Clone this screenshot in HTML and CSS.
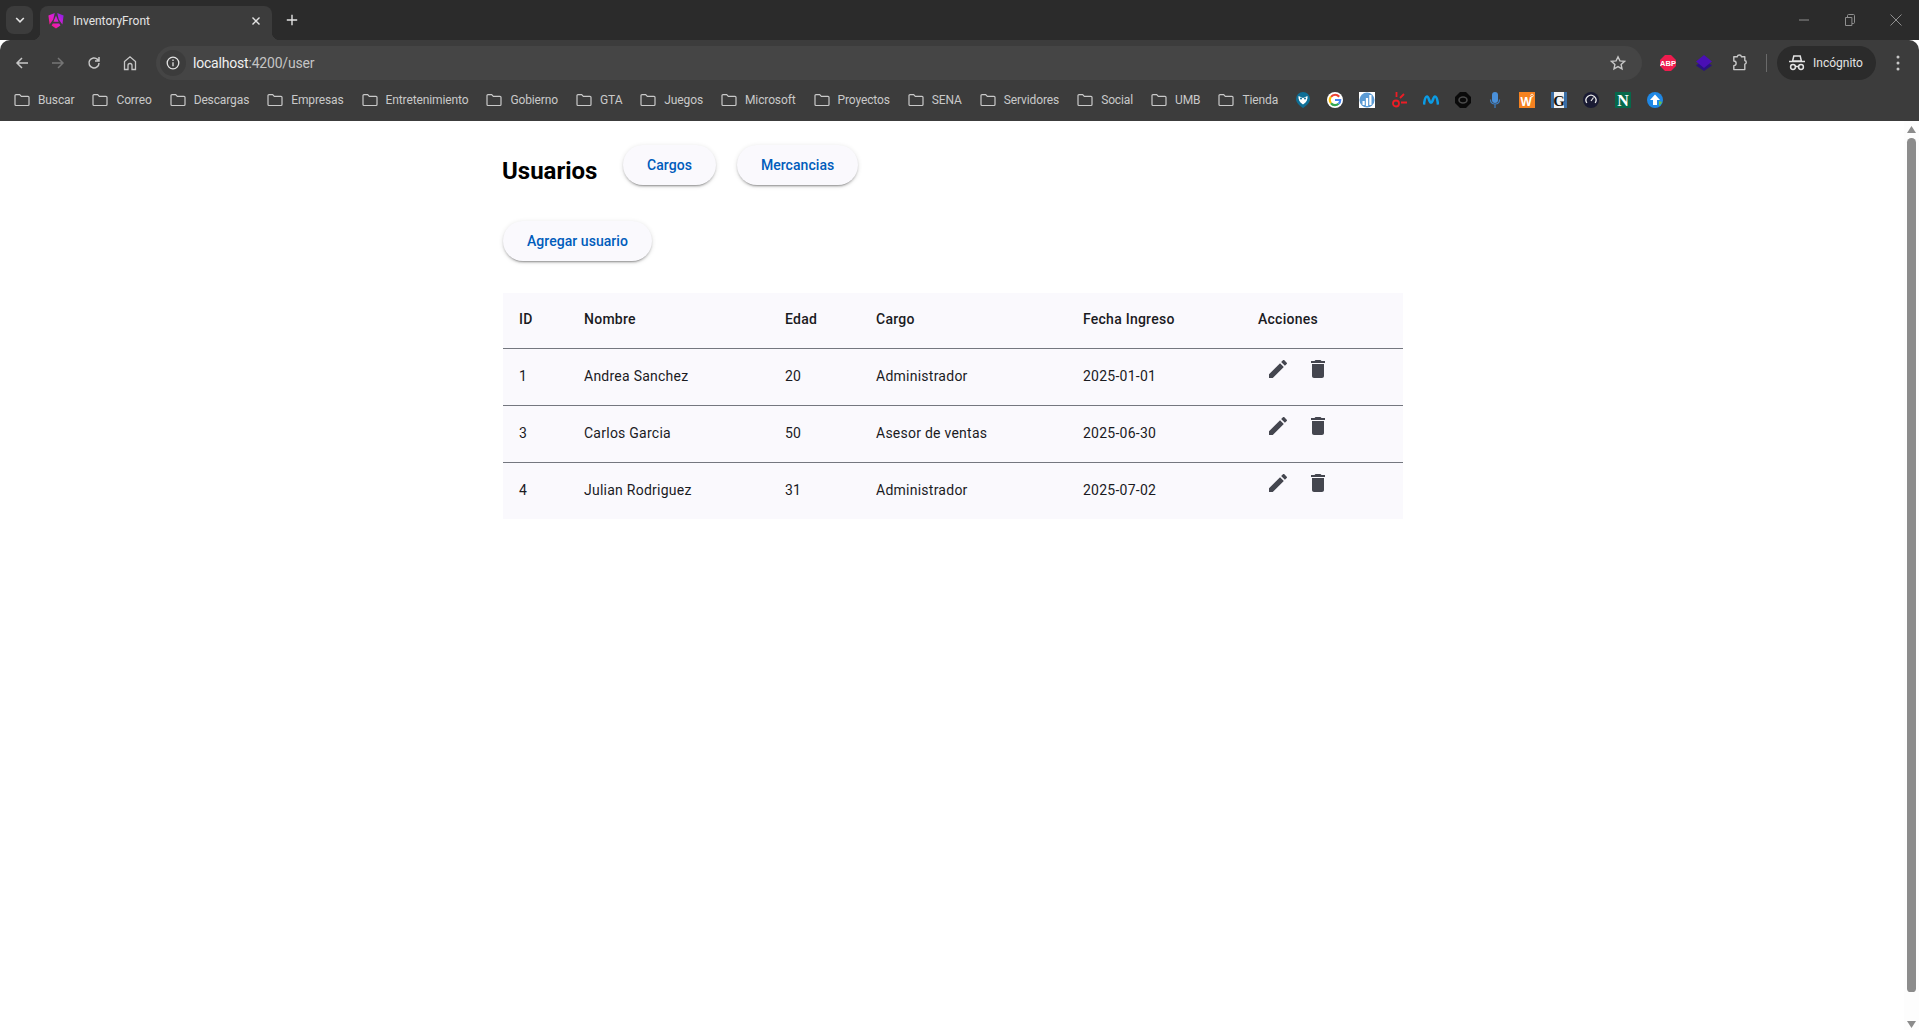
FILE: index.html
```html
<!DOCTYPE html>
<html lang="es">

<head>
	<meta charset="utf-8" />
	<title>InventoryFront</title>
	<link rel="stylesheet" href="styles.css">
</head>

<body>
	<svg class="defs" width="0" height="0">
		<symbol id="folder" viewBox="0 0 16 16">
			<path d="M1 3.600C1 3 1.400 2.600 2 2.600h3.700l1.600 1.700H14c.6 0 1 .4 1 1v7.200c0 .6-.4 1-1 1H2c-.6 0-1-.4-1-1z" fill="none" stroke="currentColor" stroke-width="1.200" />
		</symbol>
		<symbol id="edit" viewBox="0 0 24 24">
			<path d="M3 17.25V21h3.75L17.81 9.94l-3.75-3.75L3 17.25zM20.71 7.04c.39-.39.39-1.02 0-1.41l-2.34-2.34c-.39-.39-1.02-.39-1.41 0l-1.83 1.83 3.75 3.75 1.83-1.83z" />
		</symbol>
		<symbol id="delete" viewBox="0 0 24 24">
			<path d="M6 19c0 1.1.9 2 2 2h8c1.1 0 2-.9 2-2V7H6v12zM19 4h-3.5l-1-1h-5l-1 1H5v2h14V4z" />
		</symbol>
	</svg>

	<!-- barra del navegador -->
	<div class="tabstrip">
		<div class="tabsearch">
			<svg width="12" height="12" viewBox="0 0 12 12"><path d="M2.200 4 6 7.800 9.800 4" fill="none" stroke="#e3e3e3" stroke-width="1.600" /></svg>
		</div>
		<div class="tab">
			<svg class="tabicon" width="16" height="16" viewBox="0 0 16 16">
				<defs>
					<linearGradient id="ng" x1="0" y1="1" x2="1" y2="0">
						<stop offset="0" stop-color="#ff1a5e" />
						<stop offset=".5" stop-color="#e01fd0" />
						<stop offset="1" stop-color="#7b1fe8" />
					</linearGradient>
				</defs>
				<path d="M6.800 0 .4 2.400 1.600 11.500 5.200 6.500zM9.200 0l6.400 2.400-1.200 9.100-3.600-5zM8 2.600 5.400 8.800h5.200zM4.800 10.600h6.400l1.200 2L8 15.600l-4.400-3z" fill="url(#ng)" />
			</svg>
			<span class="tabtitle">InventoryFront</span>
			<svg class="tabclose" width="10" height="10" viewBox="0 0 10 10"><path d="M1.500 1.500l7 7m0-7l-7 7" stroke="#e3e3e3" stroke-width="1.400" /></svg>
		</div>
		<div class="newtab">
			<svg width="12" height="12" viewBox="0 0 12 12"><path d="M6 .8v10.400M.8 6h10.400" stroke="#e3e3e3" stroke-width="1.400" /></svg>
		</div>
		<div class="winctrls">
			<div class="winbtn"><svg width="10" height="10" viewBox="0 0 10 10"><path d="M0 5h10" stroke="#8f8f8f" /></svg></div>
			<div class="winbtn"><svg width="10" height="12" viewBox="0 0 10 12"><path d="M.5 3.500h6.400v8H.5zM2.500 3V1.500c0-.6.4-1 1-1h5c.6 0 1 .4 1 1v7c0 .6-.4 1-1 1H7" fill="none" stroke="#8f8f8f" /></svg></div>
			<div class="winbtn"><svg width="12" height="12" viewBox="0 0 12 12"><path d="M.5.5l11 11m0-11l-11 11" stroke="#8f8f8f" /></svg></div>
		</div>
	</div>

	<div class="toolbar">
		<div class="tbtn"><svg width="16" height="16" viewBox="0 0 16 16"><path d="M14 8H3M8 3 3 8l5 5" fill="none" stroke="#c7c7c7" stroke-width="1.500" /></svg></div>
		<div class="tbtn"><svg width="16" height="16" viewBox="0 0 16 16"><path d="M2 8h11M8 3l5 5-5 5" fill="none" stroke="#757575" stroke-width="1.500" /></svg></div>
		<div class="tbtn"><svg width="16" height="16" viewBox="0 0 16 16"><path d="M13 8a5 5 0 1 1-1.500-3.600L13 6M13 2v4H9" fill="none" stroke="#c7c7c7" stroke-width="1.500" /></svg></div>
		<div class="tbtn"><svg width="16" height="16" viewBox="0 0 16 16"><path d="M2.500 14.500V6.500L8 1.800l5.500 4.700v8H10V10.500a2 2 0 0 0-4 0v4z" fill="none" stroke="#c7c7c7" stroke-width="1.300" /></svg></div>
		<div class="omnibox">
			<div class="siteinfo">
				<svg width="14" height="14" viewBox="0 0 14 14"><circle cx="7" cy="7" r="5.800" fill="none" stroke="#e3e3e3" stroke-width="1.300" /><path d="M7 6.200v4M7 3.600v1.400" stroke="#e3e3e3" stroke-width="1.300" /></svg>
			</div>
			<span class="url"><span class="host">localhost</span>:4200/user</span>
			<svg class="star" width="16" height="16" viewBox="0 0 16 16"><path d="M8 1.800l1.900 4.100 4.500.5-3.300 3 .9 4.400L8 11.600l-4 2.200.9-4.400-3.300-3 4.500-.5z" fill="none" stroke="#c7c7c7" stroke-width="1.400" /></svg>
		</div>
		<div class="tbtn">
			<svg width="16" height="16" viewBox="0 0 16 16"><path d="M5 0h6l5 5v6l-5 5H5l-5-5V5z" fill="#ee1c4e" /><text x="8" y="10.800" class="abp">ABP</text></svg>
		</div>
		<div class="tbtn">
			<svg width="16" height="16" viewBox="0 0 16 16"><path d="M8 4.500 16 10.500 8 16 0 10.500z" fill="#2a1280" /><path d="M8 0l8 6.500L8 13 0 6.500z" fill="#4a0fb5" /></svg>
		</div>
		<div class="tbtn">
			<svg width="18" height="18" viewBox="0 0 18 18"><path d="M2.800 2.800h3.400a2.200 2.200 0 0 1 4.300 0h3.300v3.700a1.900 1.900 0 0 1 0 3.700v5.400H2.800v-3.900a2 2 0 0 0 0-4.700z" fill="none" stroke="#c7c7c7" stroke-width="1.400" stroke-linejoin="round" /></svg>
		</div>
		<div class="tbsep"></div>
		<div class="incognito">
			<svg width="18" height="18" viewBox="0 0 18 18"><path d="M5.800 2h6.400l1.200 5H4.600zM1 7.500h16" fill="none" stroke="#e3e3e3" stroke-width="1.500" /><circle cx="5" cy="13" r="2.400" fill="none" stroke="#e3e3e3" stroke-width="1.500" /><circle cx="13" cy="13" r="2.400" fill="none" stroke="#e3e3e3" stroke-width="1.500" /><path d="M7.500 12.500h3" stroke="#e3e3e3" stroke-width="1.500" /></svg>
			<span>Incógnito</span>
		</div>
		<div class="menubtn">
			<svg width="4" height="16" viewBox="0 0 4 16"><circle cx="2" cy="2" r="1.500" fill="#c7c7c7" /><circle cx="2" cy="8" r="1.500" fill="#c7c7c7" /><circle cx="2" cy="14" r="1.500" fill="#c7c7c7" /></svg>
		</div>
	</div>

	<div class="bookmarks">
		<div class="bm"><svg><use href="#folder" /></svg>Buscar</div>
		<div class="bm"><svg><use href="#folder" /></svg>Correo</div>
		<div class="bm"><svg><use href="#folder" /></svg>Descargas</div>
		<div class="bm"><svg><use href="#folder" /></svg>Empresas</div>
		<div class="bm"><svg><use href="#folder" /></svg>Entretenimiento</div>
		<div class="bm"><svg><use href="#folder" /></svg>Gobierno</div>
		<div class="bm"><svg><use href="#folder" /></svg>GTA</div>
		<div class="bm"><svg><use href="#folder" /></svg>Juegos</div>
		<div class="bm"><svg><use href="#folder" /></svg>Microsoft</div>
		<div class="bm"><svg><use href="#folder" /></svg>Proyectos</div>
		<div class="bm"><svg><use href="#folder" /></svg>SENA</div>
		<div class="bm"><svg><use href="#folder" /></svg>Servidores</div>
		<div class="bm"><svg><use href="#folder" /></svg>Social</div>
		<div class="bm"><svg><use href="#folder" /></svg>UMB</div>
		<div class="bm"><svg><use href="#folder" /></svg>Tienda</div>
		<div class="favs">
			<svg viewBox="0 0 16 16"><path d="M8 0a7 7 0 0 1 7 7c0 4-4 7-7 9-3-2-7-5-7-9a7 7 0 0 1 7-7z" fill="#0f6f96" /><path d="M3.500 4 8 6l4.500-2c.5 3-1 6.500-4.500 8.500C4.500 10.500 3 7 3.500 4z" fill="#fff" /><circle cx="6" cy="6.500" r="1" fill="#0f6f96" /><circle cx="10" cy="6.500" r="1" fill="#0f6f96" /></svg>
			<svg viewBox="0 0 16 16"><circle cx="8" cy="8" r="8" fill="#fff" /><g fill="none" stroke-width="2.200"><path d="M12.200 4.700A5.200 5.200 0 0 0 4 4.800" stroke="#ea4335" /><path d="M4 4.800a5.200 5.200 0 0 0 0 6.400" stroke="#fbbc05" /><path d="M4 11.200a5.200 5.200 0 0 0 7.600.6" stroke="#34a853" /><path d="M11.600 11.800A5.200 5.200 0 0 0 13.200 8H8" stroke="#4285f4" /></g></svg>
			<svg viewBox="0 0 16 16"><rect width="16" height="16" fill="#fff" /><circle cx="8" cy="8" r="7.500" fill="#5b9bd5" /><path d="M3.500 9h2.200v4H3.500zM6.900 6h2.200v8H6.900zM10.300 3h2.200v10h-2.200z" fill="#fff" /></svg>
			<svg viewBox="0 0 16 16" fill="none" stroke="#ee1c25" stroke-width="1.800"><circle cx="5" cy="11.500" r="3" /><path d="M5.500 0v5M9 6l4-4M10 10.500h6" /></svg>
			<svg viewBox="0 0 16 16"><path d="M1 12.500C1.500 8 2.500 4.500 4 4.500c2 0 2 6 4 6s2-6 4-6c1.500 0 2.500 3.500 3 8" fill="none" stroke="#0b9ce5" stroke-width="2.600" /></svg>
			<svg viewBox="0 0 16 16"><path d="M5 0h6l5 5v6l-5 5H5l-5-5V5z" fill="#0a0a0a" /><ellipse cx="8" cy="8" rx="4" ry="3" fill="none" stroke="#4a4a4a" stroke-width="1.600" /></svg>
			<svg viewBox="0 0 16 16"><rect x="5" y="0" width="6" height="11" rx="3" fill="#4a90d9" /><path d="M3.500 7.500c0 3 2 4.500 4.500 4.500s4.500-1.500 4.500-4.500M8 12v4" fill="none" stroke="#3d7fc4" stroke-width="1.200" /></svg>
			<svg viewBox="0 0 16 16"><rect width="16" height="16" fill="#f58220" /><text x="7" y="14" class="favw">W</text><circle cx="13" cy="3.500" r="1.300" fill="none" stroke="#fff" stroke-width=".8" /></svg>
			<svg viewBox="0 0 16 16"><rect width="16" height="16" fill="#3b6ea5" /><rect x="3" y="0" width="10" height="16" fill="#f2f2f2" /><text x="8" y="14" class="favg">G</text></svg>
			<svg viewBox="0 0 16 16"><circle cx="8" cy="8" r="8" fill="#1a1b33" /><path d="M3.800 11a5 5 0 1 1 8.400 0" fill="none" stroke="#e8e8e8" stroke-width="1.300" /><path d="M8 9l2.500-3.500" stroke="#e8e8e8" stroke-width="1.200" /></svg>
			<svg viewBox="0 0 16 16"><rect width="16" height="16" fill="#06684a" /><text x="8" y="14" class="favn">N</text></svg>
			<svg viewBox="0 0 16 16"><circle cx="8" cy="8" r="8" fill="#1f88e5" /><path d="M12 14a8 8 0 0 0 3-4l-3-1z" fill="#6cc04a" /><path d="M8 2.500 13 8h-3v5H6V8H3z" fill="#fff" /></svg>
		</div>
	</div>

	<!-- contenido -->
	<div class="viewport">
		<main class="page">
			<div class="titlerow">
				<h2 class="title">Usuarios</h2>
				<a class="pillbtn">Cargos</a>
				<a class="pillbtn">Mercancias</a>
			</div>
			<a class="pillbtn addbtn">Agregar usuario</a>
			<table class="usertable">
				<thead>
					<tr>
						<th class="col-id">ID</th>
						<th class="col-name">Nombre</th>
						<th class="col-age">Edad</th>
						<th class="col-job">Cargo</th>
						<th class="col-date">Fecha Ingreso</th>
						<th class="col-act">Acciones</th>
					</tr>
				</thead>
				<tbody>
					<tr>
						<td>1</td>
						<td>Andrea Sanchez</td>
						<td>20</td>
						<td>Administrador</td>
						<td>2025-01-01</td>
						<td class="actions">
							<div class="actionbox">
								<span class="iconbtn"><svg><use href="#edit" /></svg></span>
								<span class="iconbtn"><svg><use href="#delete" /></svg></span>
							</div>
						</td>
					</tr>
					<tr>
						<td>3</td>
						<td>Carlos Garcia</td>
						<td>50</td>
						<td>Asesor de ventas</td>
						<td>2025-06-30</td>
						<td class="actions">
							<div class="actionbox">
								<span class="iconbtn"><svg><use href="#edit" /></svg></span>
								<span class="iconbtn"><svg><use href="#delete" /></svg></span>
							</div>
						</td>
					</tr>
					<tr>
						<td>4</td>
						<td>Julian Rodriguez</td>
						<td>31</td>
						<td>Administrador</td>
						<td>2025-07-02</td>
						<td class="actions">
							<div class="actionbox">
								<span class="iconbtn"><svg><use href="#edit" /></svg></span>
								<span class="iconbtn"><svg><use href="#delete" /></svg></span>
							</div>
						</td>
					</tr>
				</tbody>
			</table>
		</main>
		<div class="scrollbar">
			<div class="sb-up"></div>
			<div class="sb-thumb"></div>
			<div class="sb-down"></div>
		</div>
	</div>
</body>

</html>
```

FILE: styles.css
```css
* {
	margin: 0;
	padding: 0;
	box-sizing: border-box;
}

html,
body {
	height: 100%;
	overflow: hidden;
}

body {
	display: flex;
	flex-direction: column;
	background: #fff;
	font-family: Roboto, "Liberation Sans", sans-serif;
}

.defs {
	position: absolute;
}

/* pestañas */
.tabstrip {
	display: flex;
	align-items: flex-start;
	height: 40px;
	padding: 6px 0 0 6px;
	background: #2b2b2b;
	flex: none;
}

.tabsearch {
	display: flex;
	align-items: center;
	justify-content: center;
	width: 27px;
	height: 28px;
	border-radius: 8px;
	background: #3c3c3c;
}

.tab {
	position: relative;
	display: flex;
	align-items: center;
	width: 232px;
	height: 34px;
	margin-left: 7px;
	padding: 0 11px 4px 8px;
	border-radius: 8px 8px 0 0;
	background: #3c3c3c;
	color: #e3e3e3;
	font-size: 12px;
}

.tab:before,
.tab:after {
	content: '';
	position: absolute;
	bottom: 0;
	width: 8px;
	height: 8px;
}

.tab:before {
	left: -8px;
	background: radial-gradient(circle at 0 0, #2b2b2b 8px, #3c3c3c 8.5px);
}

.tab:after {
	right: -8px;
	background: radial-gradient(circle at 100% 0, #2b2b2b 8px, #3c3c3c 8.5px);
}

.tabtitle {
	flex: 1;
	margin-left: 9px;
}

.newtab {
	display: flex;
	align-items: center;
	justify-content: center;
	width: 28px;
	height: 28px;
	margin-left: 6px;
}

.winctrls {
	display: flex;
	margin-left: auto;
	margin-top: -6px;
}

.winbtn {
	display: flex;
	align-items: center;
	justify-content: center;
	width: 46px;
	height: 40px;
}

/* barra de direcciones */
.toolbar {
	display: flex;
	align-items: center;
	height: 42px;
	padding: 6px 0 2px 4px;
	background: #3c3c3c;
	border-radius: 10px 10px 0 0;
	flex: none;
}

.tbtn {
	display: flex;
	align-items: center;
	justify-content: center;
	width: 36px;
	height: 34px;
	flex: none;
}

.omnibox {
	display: flex;
	align-items: center;
	flex: 1;
	height: 34px;
	margin: 0 8px 0 8px;
	padding: 0 16px 0 4px;
	border-radius: 17px;
	background: #454545;
}

.siteinfo {
	display: flex;
	align-items: center;
	justify-content: center;
	width: 26px;
	height: 26px;
	border-radius: 50%;
	background: #3c3c3c;
}

.url {
	flex: 1;
	margin-left: 7px;
	color: #c4c4c4;
	font-size: 14px;
	letter-spacing: -.2px;
}

.host {
	color: #f0f0f0;
}

.tbsep {
	width: 1px;
	height: 18px;
	margin: 0 10px 0 8px;
	background: #6a6a6a;
	flex: none;
}

.incognito {
	display: flex;
	align-items: center;
	gap: 7px;
	width: 99px;
	height: 34px;
	padding-left: 11px;
	border-radius: 17px;
	background: #2b2b2b;
	color: #e3e3e3;
	font-size: 12px;
	flex: none;
}

.menubtn {
	display: flex;
	justify-content: center;
	width: 43px;
	flex: none;
}

/* marcadores */
.bookmarks {
	display: flex;
	align-items: center;
	gap: 18px;
	height: 39px;
	padding: 0 0 3px 14px;
	background: #3c3c3c;
	color: #c9c9c9;
	font-size: 12px;
	letter-spacing: -.12px;
	flex: none;
}

.bm {
	display: flex;
	align-items: center;
	gap: 8px;
}

.bm svg {
	width: 16px;
	height: 16px;
	color: #c9c9c9;
}

.favs {
	display: flex;
	gap: 16px;
	margin-left: -1px;
}

.favs svg {
	width: 16px;
	height: 16px;
}

.abp {
	fill: #fff;
	font: 700 7.500px "Liberation Sans", sans-serif;
	text-anchor: middle;
}

.favw {
	fill: #fff;
	font: 700 12px "Liberation Sans", sans-serif;
	text-anchor: middle;
}

.favg {
	fill: #111;
	font: 700 15px "Liberation Serif", serif;
	text-anchor: middle;
}

.favn {
	fill: #fff;
	font: 700 16px "Liberation Serif", serif;
	text-anchor: middle;
}

/* contenido */
.viewport {
	display: flex;
	flex: 1;
	min-height: 0;
}

.page {
	flex: 1;
	padding: 24px 0 0 503px;
}

.titlerow {
	display: flex;
	align-items: flex-start;
	gap: 21px;
	margin-bottom: 34px;
}

.title {
	width: 99px;
	margin-top: 10px;
	margin-left: -1px;
	margin-right: 1px;
	color: #000;
	font-size: 24px;
	line-height: 32px;
	font-weight: 700;
}

.pillbtn {
	display: inline-flex;
	align-items: center;
	height: 40px;
	padding: 0 24px;
	border-radius: 20px;
	background: #faf9fd;
	box-shadow: 0 3px 1px -2px rgba(0, 0, 0, .2), 0 2px 2px rgba(0, 0, 0, .14), 0 1px 5px rgba(0, 0, 0, .12);
	color: #005cbb;
	font-size: 14px;
	font-weight: 500;
	letter-spacing: .05px;
}

.addbtn {
	display: flex;
	width: fit-content;
	margin-bottom: 32px;
}

.usertable {
	width: 900px;
	border-collapse: separate;
	border-spacing: 0;
	table-layout: fixed;
	background: #faf9fd;
	color: #1a1b1f;
	font-size: 14px;
	letter-spacing: .25px;
	text-align: left;
}

.col-id {
	width: 65px;
}

.col-name {
	width: 201px;
}

.col-age {
	width: 91px;
}

.col-job {
	width: 207px;
}

.col-date {
	width: 175px;
}

.usertable th {
	height: 56px;
	padding: 0 16px 3px;
	font-weight: 500;
	border-bottom: 1px solid #74777f;
}

.usertable td {
	height: 57px;
	padding: 0 16px 2px;
	border-bottom: 1px solid #74777f;
}

.usertable tr:last-child td {
	height: 56px;
	border-bottom: 0;
}

.usertable td.actions {
	padding: 0 16px;
	vertical-align: top;
}

.actionbox {
	display: flex;
}

.iconbtn {
	display: flex;
	align-items: center;
	justify-content: center;
	width: 40px;
	height: 40px;
}

.iconbtn svg {
	width: 24px;
	height: 24px;
	fill: #44464f;
}

/* barra de scroll */
.scrollbar {
	display: flex;
	flex-direction: column;
	align-items: center;
	width: 15px;
	padding: 5px 0 2px;
	background: #fdfdfd;
	flex: none;
}

.sb-up,
.sb-down {
	width: 9px;
	height: 7px;
	background: #8c8c8c;
	clip-path: polygon(50% 0, 100% 100%, 0 100%);
}

.sb-down {
	clip-path: polygon(0 0, 100% 0, 50% 100%);
}

.sb-thumb {
	flex: 1;
	width: 9px;
	margin: 5px 0 29px;
	border-radius: 5px 5px 4px 4px;
	background: #8c8c8c;
}
```
